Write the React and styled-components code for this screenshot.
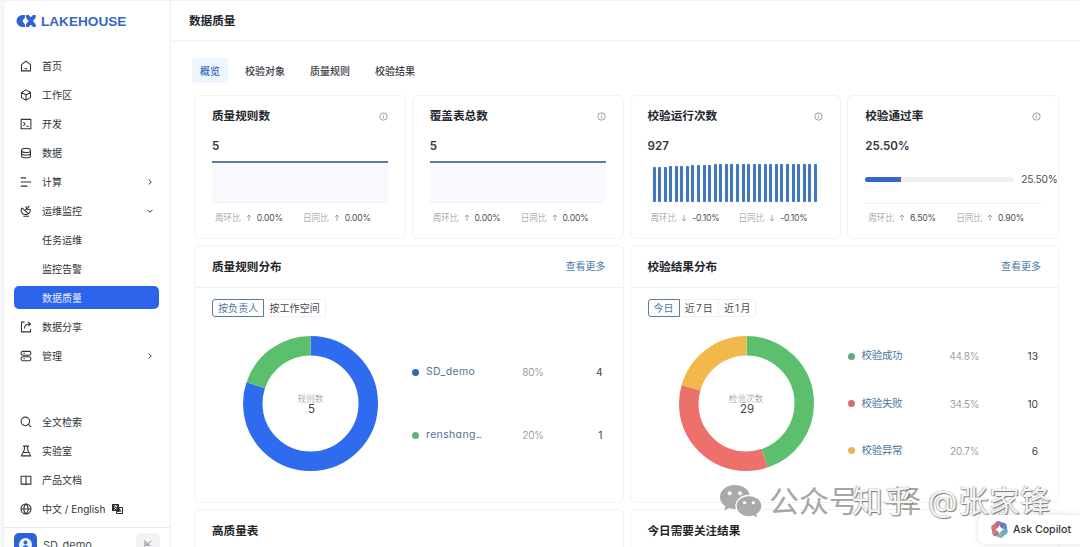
import React from "react";
import styled, { createGlobalStyle } from "styled-components";

const GlobalStyle = createGlobalStyle`
  * {
    box-sizing: border-box;
  }

  body {
    margin: 0;
    background: #fff;
    color: #2b2f36;
    font-family: Inter, "Noto Sans CJK SC", sans-serif;
    font-feature-settings: "cv11";
    font-size: 10px;
  }

  #root {
    height: 547px;
    overflow: hidden;
  }
`;

const Page = styled.div`
  position: relative;
  display: flex;
  height: 547px;
  padding-left: 3px;
  background: #f7f8f9;
  border-top: 1px solid #f3f3f4;
  overflow: hidden;
`;

const Sidebar = styled.aside`
  display: flex;
  flex-direction: column;
  width: 168px;
  flex-shrink: 0;
  background: #fff;
  border: 1px solid #eeeff1;
  border-width: 0 1px;
  border-top-left-radius: 5px;
`;

const Brand = styled.div`
  display: flex;
  align-items: center;
  gap: 5px;
  height: 40px;
  flex-shrink: 0;
  padding-left: 12px;
  color: #3567c6;
  font-family: "Liberation Sans", sans-serif;
  font-size: 13.6px;
  font-weight: 700;
`;

const Menu = styled.nav`
  display: flex;
  flex-direction: column;
  flex-shrink: 0;
  gap: 6px;
  padding: 13px 11px 0 10px;
  margin-bottom: ${({ $bottom }) => $bottom || 0}px;
`;

const MenuItem = styled.a`
  display: flex;
  align-items: center;
  height: 23px;
  padding: 0 5px 0 6px;
  border-radius: 5px;
  color: ${({ $active }) => ($active ? "#e9f0ff" : "#303338")};
  background: ${({ $active }) => ($active ? "#2b63eb" : "transparent")};
`;

const IconSlot = styled.span`
  display: flex;
  width: 22px;
`;

const MenuLabel = styled.span`
  display: flex;
  align-items: center;
  gap: 7px;
  flex: 1;
  white-space: nowrap;
`;

const UserBar = styled.div`
  display: flex;
  align-items: flex-start;
  height: 40px;
  flex-shrink: 0;
  margin-top: 7px;
  padding: 5px 10px 0;
  border-top: 1px solid #e9eaec;
`;

const Avatar = styled.div`
  display: flex;
  align-items: center;
  justify-content: center;
  width: 23px;
  height: 23px;
  border-radius: 5px;
  background: #2f62d8;
`;

const UserName = styled.span`
  flex: 1;
  padding: 5px 0 0 6px;
  font-size: 11px;
  line-height: 14px;
  color: #4a4e55;
`;

const Collapse = styled.span`
  display: flex;
  align-items: center;
  justify-content: center;
  width: 24px;
  height: 22px;
  border-radius: 5px;
  background: #f1f3f5;
  color: #777d86;
`;

const Main = styled.main`
  flex: 1;
  min-width: 0;
  background: #fff;
`;

const TopBar = styled.header`
  display: flex;
  align-items: center;
  height: 41px;
  padding: 0 0 1px 18px;
  border-bottom: 2px solid #f6f6f7;
  color: #22262c;
  font-size: 11.6px;
  font-weight: 600;
`;

const Content = styled.div`
  width: 888px;
  padding: 16px 0 0 23px;
`;

const Tabs = styled.div`
  display: flex;
  gap: 9px;
  margin: 0 0 12px -2px;
`;

const Tab = styled.span`
  display: flex;
  align-items: center;
  height: 25px;
  padding: 0 8px;
  border-radius: 3px;
  font-weight: 500;
  color: ${({ $active }) => ($active ? "#3568b9" : "#3c4046")};
  background: ${({ $active }) => ($active ? "#edf5ff" : "transparent")};
`;

const StatGrid = styled.div`
  display: grid;
  grid-template-columns: repeat(4, 1fr);
  gap: 6px;
`;

const Card = styled.section`
  min-width: 0;
  background: #fff;
  border: 1px solid #f2f2f3;
  border-radius: 6px;
`;

const StatCard = styled(Card)`
  height: 144px;
  padding: 12px 17px 0;
`;

const StatHead = styled.div`
  display: flex;
  align-items: center;
  justify-content: space-between;
  height: 16px;
  color: #24282e;
  font-size: 11.6px;
  font-weight: 600;
  line-height: 16px;

  svg {
    color: #7a7e84;
  }
`;

const StatValue = styled.div`
  height: 16px;
  margin-top: 14px;
  color: #33373d;
  font-size: 11.6px;
  font-weight: 600;
  line-height: 16px;
`;

const StatChart = styled.div`
  height: 49px;
  padding-top: 7px;
`;

const AreaChart = styled.div`
  height: 42px;
  border-top: 2px solid #5d7da3;
  border-bottom: 1px solid #f3f5f8;
  background: #f8fafe;
`;

const BarChart = styled.div`
  display: flex;
  align-items: flex-end;
  justify-content: space-between;
  height: 42px;
  padding: 0 6px 1px 5px;
`;

const Bar = styled.span`
  width: 3px;
  border-radius: 1px;
  background: #4476bd;
  box-shadow: 0 0 1px #a9d1f7;
`;

const ProgressChart = styled.div`
  display: flex;
  align-items: center;
  gap: 7px;
  height: 42px;
  padding-bottom: 6px;
  margin-right: -20px;
  color: #4b4f55;
  font-size: 10.2px;
  letter-spacing: -0.2px;
`;

const Track = styled.div`
  width: 149px;
  height: 5px;
  flex-shrink: 0;
  border-radius: 3px;
  background: #f0f0f1;
  overflow: hidden;
`;

const Fill = styled.div`
  height: 100%;
  background: #3767c8;
`;

const Compare = styled.div`
  display: grid;
  grid-template-columns: 88px auto;
  padding: 7px 0 0 3px;
  border-top: 1px solid ${({ $ruled }) => ($ruled ? "#eeeeef" : "transparent")};
  color: #7f8389;
  font-size: 8.6px;
  font-weight: 300;
  line-height: 14px;
`;

const CompareItem = styled.span`
  display: flex;
  align-items: center;
  gap: 4px;
  white-space: nowrap;
`;

const CompareValue = styled.b`
  color: #494d53;
  font-weight: 400;
  letter-spacing: -0.15px;
`;

const PanelGrid = styled.div`
  display: grid;
  grid-template-columns: 1fr 1fr;
  gap: 6px;
  margin-top: 6px;
`;

const Panel = styled(Card)`
  height: 258px;
`;

const PanelHead = styled.div`
  display: flex;
  align-items: center;
  justify-content: space-between;
  height: 42px;
  padding: 0 17px 2px;
  border-bottom: 1px solid #f0f0f1;
  color: #22262b;
  font-size: 11.6px;
  font-weight: 600;
`;

const More = styled.a`
  color: #4b7ba5;
  font-size: 10px;
  font-weight: 400;
`;

const Segments = styled.div`
  display: flex;
  margin: 11px 0 0 17px;
`;

const Segment = styled.span`
  display: flex;
  align-items: center;
  height: 18px;
  padding: 0 5px 1px;
  border: 1px solid ${({ $active }) => ($active ? "#587ba0" : "#eff0f1")};
  border-left-width: ${({ $active }) => ($active ? 1 : 0)}px;
  color: ${({ $active }) => ($active ? "#52779e" : "#46494e")};
  letter-spacing: 0.1px;
  word-spacing: -1.8px;

  &:first-child {
    border-radius: 3px 0 0 3px;
  }

  &:last-child {
    border-radius: 0 3px 3px 0;
  }
`;

const ChartRow = styled.div`
  display: flex;
  align-items: center;
  height: 173px;
  padding: 0 20px 0 48px;
`;

const DonutBox = styled.div`
  position: relative;
  width: 135px;
  height: 135px;
  flex-shrink: 0;
`;

const DonutText = styled.div`
  position: absolute;
  inset: 0;
  display: flex;
  flex-direction: column;
  align-items: center;
  justify-content: center;
  color: #8a8d92;
  font-size: 8.6px;
  font-weight: 300;
  line-height: 10px;
`;

const DonutTotal = styled.span`
  padding-left: 2px;
  color: #44474c;
  font-size: 11.5px;
  font-weight: 400;
`;

const Legend = styled.div`
  display: flex;
  flex: 1;
  flex-direction: column;
  justify-content: space-evenly;
  height: 173px;
  margin-left: 34px;
`;

const LegendRow = styled.div`
  display: grid;
  grid-template-columns: 7px 60px 1fr 60px;
  align-items: center;
  height: 16px;
  color: #3f4349;
  font-size: 10.2px;
  text-align: right;
`;

const Dot = styled.i`
  width: 7px;
  height: 7px;
  border-radius: 50%;
  background: ${({ $color }) => $color};
`;

const LegendName = styled.span`
  padding-left: 7px;
  color: #4e7597;
  font-size: 10.5px;
  letter-spacing: ${({ $latin }) => ($latin ? "0.35px" : "-0.3px")};
  line-height: 16px;
  text-align: left;
  white-space: nowrap;
`;

const Ellipsis = styled.span`
  letter-spacing: -1.4px;
`;

const Percent = styled.span`
  color: #85898f;
  font-weight: 300;
  letter-spacing: -0.25px;
  margin-right: -1px;
`;

const Watermark = styled.div`
  position: absolute;
  left: 720px;
  top: 483px;
  width: 340px;
  height: 36px;
  font-size: 30px;
  line-height: 34px;
  white-space: nowrap;

  svg {
    display: block;
  }
`;

const GreyMark = styled.span`
  position: absolute;
  top: 0;
  left: ${({ $left }) => $left}px;
  color: #a6a6a6;
`;

const WhiteMark = styled.span`
  position: absolute;
  top: 0;
  left: 132px;
  color: #f4f4f4;
  font-size: 30.6px;
  letter-spacing: 0.4px;
  word-spacing: 5px;
  text-shadow: 1px 1px 1px #777, -0.5px 0 1px #999;
`;

const Copilot = styled.button`
  position: absolute;
  left: 978px;
  top: 514px;
  display: flex;
  align-items: center;
  gap: 4px;
  width: 108px;
  height: 29px;
  padding: 0 0 0 12px;
  border: 0;
  border-radius: 8px;
  background: #fff;
  box-shadow: 0 0 6px rgba(0, 0, 0, 0.13);
  color: #303338;
  font: 500 10.6px Inter, sans-serif;
  font-feature-settings: "cv11";
  white-space: nowrap;
`;

const iconPaths = {
  home: "M2 6.2 8 1.5l6 4.7v8.3H2zM6 11.6h4",
  cube: "M8 1.2 14 4.5v7L8 14.8 2 11.500v-7zM2 4.500l6 3.400 6-3.400M8 7.900v6.900",
  terminal: "M1.5 1.8h13v12.4h-13zM4.5 5.5 7 8l-2.5 2.5M8.5 11h3.2",
  database:
    "M2 4.5C2 .8 14 .8 14 4.5S2 8.2 2 4.5v7c0 3.7 12 3.7 12 0v-7M2 8c0 3.7 12 3.7 12 0",
  compute: "M1 2.5h7M1 8h14M1 13.5h9",
  monitor:
    "M2.600 3.800C.2 7.500 2 12.600 7 12.800c4.500.2 7.300-3.300 6.600-7.300M2.600 3.800l8.600 7.800M6.800 7.400l2.600-3M8.500 1.500c-1.500 3 1.500 5.500 5 4M12.500 1.200l-3 3.600M4.500 15h7.500",
  share: "M6 1.5H2v13h12v-4M6 10c0-4 2.5-6 7-6M10.5 1.2 14 4l-3 3",
  manage:
    "M4 1.8h8a2.6 2.6 0 0 1 0 5.2H4a2.6 2.6 0 0 1 0-5.2zM4 9h8a2.6 2.6 0 0 1 0 5.2H4A2.6 2.6 0 0 1 4 9zM4.5 4.4h2M4.5 11.6h2",
  search: "M12.8 7.2a5.7 5.7 0 1 1-11.4 0 5.7 5.7 0 0 1 11.4 0M11.3 11.3l3.6 3.6",
  lab: "M4 1.5h8M5.8 1.5v5L1.8 14.5h12.4l-4-8v-5M4.2 10h7.6",
  book: "M8 3v11M8 3H1.5v10.5H7l1 .8 1-.8h5.5V3z",
  globe:
    "M14.7 8A6.7 6.7 0 1 1 1.3 8a6.7 6.7 0 0 1 13.4 0M1.3 8h13.4M8 1.3c-4 4-4 9.4 0 13.4 4-4 4-9.4 0-13.4",
  right: "M5.5 3l5 5-5 5",
  down: "M3 5.5l5 5 5-5",
  info: "M14.5 8a6.5 6.5 0 1 1-13 0 6.5 6.5 0 0 1 13 0M8 7v4.5M8 4.2v1.2",
  up: "M8 14V2M4 6l4-4 4 4",
  fall: "M8 2v12M4 10l4 4 4-4",
  collapse: "M3 2v12M13 3l-7 7M6 4.5V10h6",
};

const Icon = ({ name, size = 12, width = 1.4 }) => (
  <svg width={size} height={size} viewBox="0 0 16 16" fill="none">
    <path
      d={iconPaths[name]}
      stroke="currentColor"
      strokeWidth={width}
      strokeLinejoin="round"
    />
  </svg>
);

const LogoIcon = () => (
  <svg width="20" height="14" viewBox="0 0 20 14" fill="#2f64d4">
    <path d="M9 1v2.600L6.400 7 9 10.400V13H6.500A6 6 0 0 1 6.500 1z" />
    <path d="M10 1h2.600l2.200 2.300L17 1h2.700v2.800L17 7l2.700 3.200V13H17l-2.200-2.300-2.200 2.300H10v-2.800L12.600 7 10 3.800z" />
  </svg>
);

const TranslateIcon = () => (
  <svg width="11" height="10" viewBox="0 0 22 20">
    <rect x="0" y="0" width="14" height="14" rx="1" fill="#25282c" />
    <path d="M3 4h8M7 2v2M4 11c3-1 5-3 5-7M4.5 6l5 5" stroke="#fff" strokeWidth="1.5" fill="none" />
    <path d="M10 7h11v12H9v-4h5V7" stroke="#25282c" strokeWidth="2" fill="#fff" />
    <path d="m13 16 2.5-6 2.5 6M14 14h3" stroke="#25282c" strokeWidth="1.5" fill="none" />
  </svg>
);

const AvatarIcon = () => (
  <svg width="15" height="15" viewBox="0 0 15 15">
    <circle cx="7.5" cy="7.5" r="6.5" fill="#eef5ff" />
    <circle cx="7.5" cy="5.5" r="2" fill="#2f62d8" />
    <path d="M4 12c0-5 7-5 7 0z" fill="#2f62d8" />
  </svg>
);

const petalColors = ["#9a60a8", "#5876c2", "#61a1bd", "#78afa9", "#bf6d8a", "#c76b61"];

const CopilotIcon = () => (
  <svg width="19" height="19" viewBox="-10 -10 20 20">
    {petalColors.map((color, i) => (
      <path
        key={color}
        d="M-4.5-5.5Q-4-9.5 0-8.8L5-6.500 2.500-2.500-3-2z"
        fill={color}
        opacity="0.9"
        transform={`rotate(${i * 60})`}
      />
    ))}
    <path d="M0-4.8 1.5-1.5 4.8 0 1.5 1.5 0 4.8-1.5 1.5-4.8 0-1.5-1.5z" fill="#fff" />
  </svg>
);

const ChatBubbles = () => (
  <svg width="43" height="36" viewBox="0 0 43 36">
    <path
      d="M15 1C6.5 1 0 6.3 0 13c0 4 2 7.2 5.4 9.3L4.2 26.5l5-2.5c1.8.6 3.7.9 5.8.9 8.3 0 15-5.3 15-11.9S23.3 1 15 1z"
      fill="#aaa"
    />
    <path
      d="M29 11.5c-7.3 0-13 4.7-13 10.6s5.7 10.7 13 10.7c1.6 0 3.1-.2 4.5-.6l4.7 2.3-1.2-4c3.1-2 5-5 5-8.4 0-5.9-5.7-10.6-13-10.6z"
      fill="#aaa"
      stroke="#fff"
      strokeWidth="1.3"
    />
    <g fill="#fff">
      <circle cx="9.7" cy="9.3" r="2" />
      <circle cx="20" cy="9.3" r="2" />
      <circle cx="24.5" cy="18.7" r="1.6" />
      <circle cx="33.3" cy="18.7" r="1.6" />
    </g>
  </svg>
);

const mainMenu = [
  { label: "首页", icon: "home" },
  { label: "工作区", icon: "cube" },
  { label: "开发", icon: "terminal" },
  { label: "数据", icon: "database" },
  { label: "计算", icon: "compute", arrow: "right" },
  { label: "运维监控", icon: "monitor", arrow: "down" },
  { label: "任务运维" },
  { label: "监控告警" },
  { label: "数据质量", active: true },
  { label: "数据分享", icon: "share" },
  { label: "管理", icon: "manage", arrow: "right" },
];

const helpMenu = [
  { label: "全文检索", icon: "search" },
  { label: "实验室", icon: "lab" },
  { label: "产品文档", icon: "book" },
  { label: "中文 / English", icon: "globe", translate: true },
];

const stats = [
  { title: "质量规则数", value: "5", type: "area", trend: "up", week: "0.00%", day: "0.00%" },
  { title: "覆盖表总数", value: "5", type: "area", trend: "up", week: "0.00%", day: "0.00%" },
  { title: "校验运行次数", value: "927", type: "bars", trend: "fall", week: "-0.10%", day: "-0.10%" },
  { title: "校验通过率", value: "25.50%", type: "progress", trend: "up", week: "6.50%", day: "0.90%" },
];

const bars = Array.from({ length: 30 }, (_, i) => Math.min(38, 35 + i * 0.25));

const panels = [
  {
    title: "质量规则分布",
    segments: ["按负责人", "按工作空间"],
    label: "规则数",
    total: 5,
    items: [
      { name: "SD_demo", percent: "80%", count: 4, color: "#2f6bee", dot: "#3565c2", latin: true },
      {
        name: "renshang",
        percent: "20%",
        count: 1,
        color: "#5bbf6e",
        dot: "#60b37f",
        latin: true,
        cut: true,
      },
    ],
  },
  {
    title: "校验结果分布",
    segments: ["今日", "近 7 日", "近 1 月"],
    label: "检验次数",
    total: 29,
    items: [
      { name: "校验成功", percent: "44.8%", count: 13, color: "#5bbf6e", dot: "#5baf80" },
      { name: "校验失败", percent: "34.5%", count: 10, color: "#ed706b", dot: "#d96a72" },
      { name: "校验异常", percent: "20.7%", count: 6, color: "#f2b84b", dot: "#e5b556" },
    ],
  },
];

const Donut = ({ items, total, label }) => {
  const length = 2 * Math.PI * 57.75;
  let used = 0;
  return (
    <DonutBox>
      <svg width="135" height="135" viewBox="0 0 135 135">
        {items.map(({ name, count, color }) => {
          const part = (count / total) * length;
          const offset = -used;
          used += part;
          return (
            <circle
              key={name}
              cx="67.5"
              cy="67.5"
              r="57.75"
              fill="none"
              stroke={color}
              strokeWidth="19.5"
              strokeDasharray={`${part} ${length - part}`}
              strokeDashoffset={offset}
              transform="rotate(-90 67.5 67.5)"
            />
          );
        })}
      </svg>
      <DonutText>
        {label}
        <DonutTotal>{total}</DonutTotal>
      </DonutText>
    </DonutBox>
  );
};

const MenuList = ({ items, bottom }) => (
  <Menu $bottom={bottom}>
    {items.map(({ label, icon, arrow, active, translate }) => (
      <MenuItem key={label} $active={active}>
        <IconSlot>{icon && <Icon name={icon} />}</IconSlot>
        <MenuLabel>
          {label}
          {translate && <TranslateIcon />}
        </MenuLabel>
        {arrow && <Icon name={arrow} size={8} width={2} />}
      </MenuItem>
    ))}
  </Menu>
);

const StatGraph = ({ type, value }) => {
  if (type === "bars") {
    return (
      <BarChart>
        {bars.map((height, i) => (
          <Bar key={i} style={{ height }} />
        ))}
      </BarChart>
    );
  }
  if (type === "progress") {
    return (
      <ProgressChart>
        <Track>
          <Fill style={{ width: "24%" }} />
        </Track>
        {value}
      </ProgressChart>
    );
  }
  return <AreaChart />;
};

const App = () => (
  <>
    <GlobalStyle />
    <Page>
      <Sidebar>
        <Brand>
          <LogoIcon />
          LAKEHOUSE
        </Brand>
        <MenuList items={mainMenu} bottom={30} />
        <MenuList items={helpMenu} />
        <UserBar>
          <Avatar>
            <AvatarIcon />
          </Avatar>
          <UserName>SD_demo</UserName>
          <Collapse>
            <Icon name="collapse" size={10} />
          </Collapse>
        </UserBar>
      </Sidebar>
      <Main>
        <TopBar>数据质量</TopBar>
        <Content>
          <Tabs>
            {["概览", "校验对象", "质量规则", "校验结果"].map((tab, i) => (
              <Tab key={tab} $active={i === 0}>
                {tab}
              </Tab>
            ))}
          </Tabs>
          <StatGrid>
            {stats.map(({ title, value, type, trend, week, day }) => (
              <StatCard key={title}>
                <StatHead>
                  {title}
                  <Icon name="info" size={9} width={1.3} />
                </StatHead>
                <StatValue>{value}</StatValue>
                <StatChart>
                  <StatGraph type={type} value={value} />
                </StatChart>
                <Compare $ruled={type === "progress"}>
                  <CompareItem>
                    周环比
                    <Icon name={trend} size={8} />
                    <CompareValue>{week}</CompareValue>
                  </CompareItem>
                  <CompareItem>
                    日同比
                    <Icon name={trend} size={8} />
                    <CompareValue>{day}</CompareValue>
                  </CompareItem>
                </Compare>
              </StatCard>
            ))}
          </StatGrid>
          <PanelGrid>
            {panels.map(({ title, segments, label, total, items }) => (
              <Panel key={title}>
                <PanelHead>
                  {title}
                  <More>查看更多</More>
                </PanelHead>
                <Segments>
                  {segments.map((segment, i) => (
                    <Segment key={segment} $active={i === 0}>
                      {segment}
                    </Segment>
                  ))}
                </Segments>
                <ChartRow>
                  <Donut items={items} total={total} label={label} />
                  <Legend>
                    {items.map(({ name, percent, count, dot, latin, cut }) => (
                      <LegendRow key={name}>
                        <Dot $color={dot} />
                        <LegendName $latin={latin}>
                          {name}
                          {cut && <Ellipsis>...</Ellipsis>}
                        </LegendName>
                        <Percent>{percent}</Percent>
                        <span>{count}</span>
                      </LegendRow>
                    ))}
                  </Legend>
                </ChartRow>
              </Panel>
            ))}
            {["高质量表", "今日需要关注结果"].map((title) => (
              <Panel key={title}>
                <PanelHead>{title}</PanelHead>
              </Panel>
            ))}
          </PanelGrid>
        </Content>
      </Main>
      <Watermark>
        <ChatBubbles />
        <GreyMark $left={49}>公众号</GreyMark>
        <GreyMark $left={171}>择</GreyMark>
        <WhiteMark>知乎 @张家锋</WhiteMark>
      </Watermark>
      <Copilot>
        <CopilotIcon />
        Ask Copilot
      </Copilot>
    </Page>
  </>
);

export default App;
